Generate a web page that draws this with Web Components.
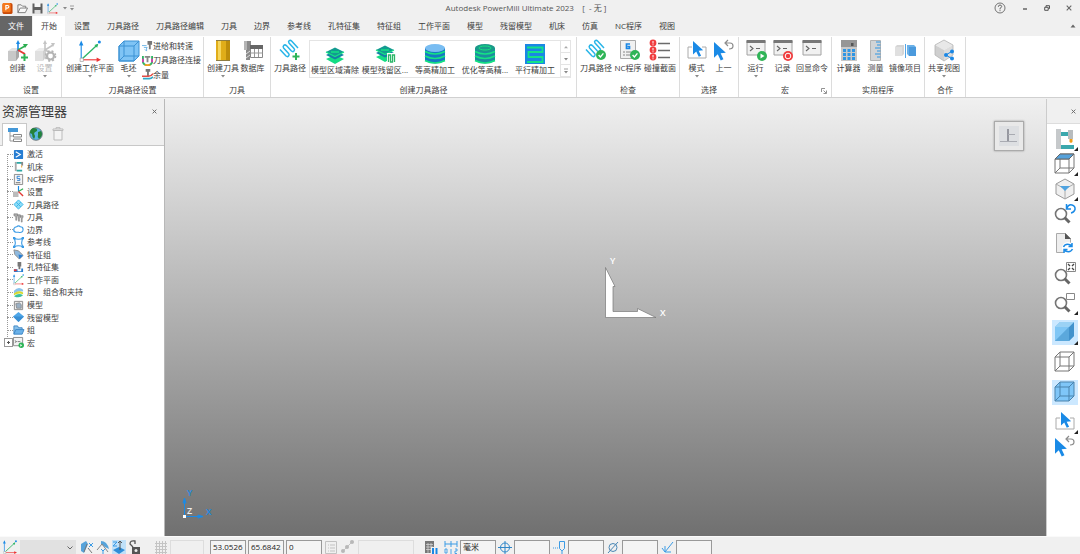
<!DOCTYPE html>
<html lang="zh-CN">
<head>
<meta charset="utf-8">
<title>Autodesk PowerMill Ultimate 2023</title>
<style>
html,body{height:100%;margin:0}
body{font-family:"Open Sans","Noto Sans CJK SC",sans-serif;font-size:8px;line-height:12px;color:#3c3c3c;background:#f0f0f0;overflow:hidden}
</style>
</head>
<body>
<pm-app></pm-app>
<script>
const RESET = `*{box-sizing:border-box}button{font:inherit;color:inherit;background:none;border:0;padding:0;margin:0;cursor:default}ul{list-style:none;margin:0;padding:0}a{color:inherit;text-decoration:none}`;

function define(name, css, html) {
  customElements.define(name, class extends HTMLElement {
    constructor() {
      super();
      this.attachShadow({ mode: 'open' });
    }
    connectedCallback() {
      const t = document.createElement('template');
      t.innerHTML = `<style>${RESET}${css}</style>${typeof html === 'function' ? html(this) : html}`;
      this.shadowRoot.replaceChildren(t.content.cloneNode(true));
    }
  });
}

/* Shared icon fragments */
const gCube = (f1, f2, f3) => `<path d="M1 11l4-3h7l-3 3z" fill="${f1}"/><path d="M1 11h8v10H1z" fill="${f2}"/><path d="M9 11l3-3v9l-3 4z" fill="${f3}"/>`;
const arrowSel = '<path d="M0 0v15l3.6-3.4 2.8 6 2.6-1.200-2.700-5.700 5-.4z" fill="#1a8ae6"/>';
const coil = '<path d="M1 9.500l6 6.500q1.500 1.200 2.600 0t0-2.600L4.600 8q-1-1.500.200-2.600t2.600.200l5 5.400q1.500 1.200 2.600 0t0-2.600L10 3q-1-1.500.200-2.300t2.400.3L19 8" fill="none" stroke="#28b5e8" stroke-width="1.500"/>';
const tick = (x, y) => `<circle cx="${x}" cy="${y}" r="5" fill="#2fb457"/><path d="M${x-2.4} ${y}l1.800 2 3-3.600" fill="none" stroke="#fff" stroke-width="1.300"/>`;
const term = '<path d="M2 1h18v14H2z" fill="#f1f1f1" stroke="#a2a2a2"/><path d="M1.500 0h19v3h-19z" fill="#777"/><path d="M5 6l3 2.500L5 11M11 8.500h4" fill="none" stroke="#666" stroke-width="1.100"/>';
const layers = '<path d="M2 15l9-4 9 4-9 5z" fill="#14dd84"/><path d="M2 11l9-4.500L20 11l-9 4.500z" fill="#167fa5"/><path d="M2 8l9-4.500L20 8l-9 4.500z" fill="#139b90"/><path d="M2 8l9 4.500L20 8M7 8h8" fill="none" stroke="#15e284" stroke-width="1.300"/>';
const lens = '<circle cx="7" cy="11" r="5.500" fill="none" stroke="#757575" stroke-width="1.600"/><path d="M10.500 14.500l5 5" stroke="#666" stroke-width="3"/>';
const wire = (s, f) => `<path d="M1 6l5-5h14v14l-5 5H1z" fill="${f}"/><path d="M1 6h14v14H1zM6 1h14v14H6zM1 6l5-5M15 6l5-5M15 20l5-5M1 20l5-5" fill="none" stroke="${s}"/>`;
const axes = '<path d="M2 18V3" fill="none" stroke="#1a8ae6"/><path d="M3 18h14" stroke="#e33"/><path d="M3 17L17 4" stroke="#2cb564" stroke-width="1.200"/><path d="M0 5l2-4.500L4 5z" fill="#1a8ae6"/><path d="M16 16l4 2-4 2z" fill="#e33"/><path d="M14 4.500l3.500-1-1 3.500z" fill="#2cb564"/><circle cx="18.500" cy="1.800" r="1.400" fill="#1a8ae6"/><path d="M1 16.500h3v3H1z" fill="#fff" stroke="#999" stroke-width=".6"/>';
const cyl = (top, body) => `<path d="M1 5v13q10 5 20 0V5z" fill="${body}"/><ellipse cx="11" cy="5" rx="10" ry="4" fill="${top}"/><path d="M1 8.500q10 5 20 0M1 13q10 5 20 0M1 17.500q10 5 20 0" fill="none" stroke="#14e382" stroke-width="1.700"/>`;

/* name: [viewBox width, viewBox height, markup] */
const ICONS = {
  logo: [11, 12, '<rect width="11" height="12" rx="2" fill="#c94a08"/><rect width="9" height="10" rx="1.500" fill="#f5781c"/><path d="M3.700 8V2.800h1.800q1.500 0 1.500 1.400T5.500 5.600H3.700" fill="none" stroke="#fff" stroke-width="1.200"/>'],
  open: [12, 11, '<path d="M1 10V1.500h3.500L6 3h3.500v2M1 10l2.500-5h8L9 10z" fill="#f8f8f8" stroke="#777"/>'],
  save: [11, 11, '<path d="M.5.500h10v10H.5z" fill="#5e5e5e"/><path d="M2.500 0h6v4h-6z" fill="#f4f4f4"/><path d="M2.500 7h6v4h-6z" fill="#ddd"/>'],
  axes: [20, 20, axes],
  create: [22, 22, gCube('#e2e2e2', '#c8c8c8', '#a8a8a8') + '<path d="M11 11V3" stroke="#1a8ae6" stroke-width="1.600"/><path d="M9 4l2-4 2 4z" fill="#1a8ae6"/><path d="M11 10l7-4" stroke="#2cae50" stroke-width="1.500"/><path d="M16 4l5 0-3 4z" fill="#2cae50"/><path d="M11 10l7 4" stroke="#e23a35" stroke-width="2"/><path d="M17.500 14v7M14 17.500h7" stroke="#2fb457" stroke-width="2"/>'],
  createOff: [22, 22, gCube('#ededed', '#e0e0e0', '#d0d0d0') + '<path d="M11 11V2M11 10l8-5M11 10l6 3" stroke="#c4c4c4" stroke-width="1.600"/><path d="M9 4l2-4 2 4zM17 3h4l-2 4z" fill="#c4c4c4"/><circle cx="16.500" cy="16" r="3.500" fill="none" stroke="#b4b4b4" stroke-width="2.200"/><circle cx="16.500" cy="16" r="5" fill="none" stroke="#b4b4b4" stroke-width="1.600" stroke-dasharray="2 2"/>'],
  block: [22, 22, '<path d="M1 6l5-5h15v15l-5 5H1z" fill="#7fc4f5"/><path d="M1 6h15v15H1zM6 1v15h15M1 21l5-5M16 6l5-5" fill="none" stroke="#3d92d4"/><path d="M1 6l5-5h15v15l-5 5H1z" fill="none" stroke="#3d92d4"/>'],
  feed: [12, 12, '<path d="M6 0h5v4H6zM7.500 4h2v5h-2z" fill="#777"/><path d="M0 5h5M2 7h4M5 7v4l-2-2" stroke="#68b2e6" fill="none"/>'],
  link: [12, 12, '<path d="M1 1v7q1 3 4 3M11 1v7q-1 3-4 3" fill="none" stroke="#2cb564" stroke-width="2"/><path d="M1 4v4M11 4v4" stroke="#d33bb0" stroke-width="2"/><path d="M3 1h6v2H7v5H5V3H3z" fill="#888"/><path d="M3 11h6" stroke="#f0a020" stroke-width="2"/>'],
  allow: [12, 12, '<path d="M4 0h5v3H4zM5.500 3h2v5h-2z" fill="#777"/><path d="M0 8h7q3 0 5-3" fill="none" stroke="#e34b45" stroke-width="1.600"/><path d="M1 10.500h7q2 0 4-2" fill="none" stroke="#32a7c7" stroke-width="2"/>'],
  tool: [22, 22, '<path d="M4 0h14v21H4z" fill="#e0ad19"/><path d="M6 0h3v21H6z" fill="#f6d65d"/><path d="M14 0h4v21h-4z" fill="#bd8d0b"/><path d="M4 .5h14M4 20.500h14" stroke="#8e7c42"/>'],
  data: [22, 22, '<path d="M2 1h7v9H2zM4 10h4v10H4z" fill="#8b8b8b"/><path d="M2 1h3v9H2z" fill="#b5b5b5"/><path d="M4 14l4-3M4 18l4-3" stroke="#ddd"/><path d="M8.500 5.500h12v12h-12z" fill="#fff" stroke="#888"/><path d="M8 5h13v4H8z" fill="#666"/><path d="M8.500 13h12M12.500 9v8M16.500 9v8" stroke="#999"/>'],
  path: [22, 22, coil + '<path d="M17 13v7M13.500 16.500h7" stroke="#2fb457" stroke-width="2"/>'],
  layers: [22, 22, '<g transform="translate(0 2)">' + layers + '</g>'],
  layers2: [22, 22, layers + '<path d="M13 11h8v10h-8z" fill="#fff"/><path d="M14.500 20v-7h2v7h2v-7h2v7" fill="none" stroke="#2bb768" stroke-width="1.300"/>'],
  cyl1: [22, 22, '<g transform="translate(0 1)">' + cyl('#79bdf2', '#1678c4') + '</g>'],
  cyl2: [22, 22, '<g transform="translate(0 1)">' + cyl('#1a9989', '#1c8c9e') + '<ellipse cx="11" cy="5" rx="6" ry="2" fill="none" stroke="#14e382"/></g>'],
  raster: [22, 22, '<path d="M1 2h20v20H1z" fill="#1a87e5"/><path d="M3 5.500h15.500v4.500H4.500v5h14v5H3" fill="none" stroke="#12e28a" stroke-width="1.800"/>'],
  pathOk: [22, 22, coil + tick(16, 15)],
  ncOk: [22, 22, '<path d="M3.500.5h15v18h-15z" fill="#f1f1f1" stroke="#aaa"/><path d="M13 4H9.500v4.500h3V6.500h-2" fill="none" stroke="#1a87e5" stroke-width="1.700"/><path d="M6 12h2M9 12h5M6 15h2M9 15h4" stroke="#888"/>' + tick(18, 15)],
  clash: [22, 22, '<g fill="#f03c3e"><circle cx="4" cy="3" r="3.400"/><circle cx="4" cy="10" r="3.400"/><circle cx="4" cy="17" r="3.400"/></g><path d="M4 1v2.500M4 4.300v1M4 8v2.500M4 11.300v1M4 15v2.500M4 18.300v1" stroke="#fff"/><path d="M9 3.500h12M9 10.500h12M9 17.500h12" stroke="#6b6b6b" stroke-width="1.500"/>'],
  mode: [22, 22, '<path d="M6 7H2v11h18V7h-4" fill="none" stroke="#aaa"/><g transform="translate(7 1) scale(.9)">' + arrowSel + '</g>'],
  last: [22, 22, '<g transform="translate(1 2) scale(1.050)">' + arrowSel + '</g><path d="M13 3h4q3 0 3 3t-4 3M15 0l-3 3 3 3" fill="none" stroke="#8b8b8b" stroke-width="1.200"/>'],
  run: [22, 22, term + '<circle cx="17" cy="16" r="5" fill="#2fb457"/><path d="M15.500 13.500v5l4-2.500z" fill="#fff"/>'],
  rec: [22, 22, term + '<circle cx="16" cy="16" r="5" fill="#f03c3e"/><circle cx="16" cy="16" r="2.800" fill="none" stroke="#fff"/>'],
  term: [22, 22, term],
  calc: [22, 22, '<path d="M3 0h16v21H3z" fill="#c9c9c9"/><path d="M3 0h16v7H3z" fill="#969696"/><path d="M13 3h2.500v3H13z" fill="#555"/><g fill="#2f96e4"><path d="M5 9h3v3H5zM9.500 9h3v3h-3zM14 9h3v3h-3zM5 13h3v3H5zM9.500 13h3v3h-3zM14 13h3v3h-3zM5 17h3v3H5zM9.500 17h3v3h-3zM14 17h3v3h-3z"/></g>'],
  measure: [22, 22, '<path d="M5.500.5h10v20h-10z" fill="#d2d4d6" stroke="#b4b4b4"/><path d="M11 2h4.500M12 5h3.500M10 8h5.500M12 11h3.500M10 14h5.500M12 17h3.500" stroke="#2f96e4"/>'],
  mirror: [22, 22, '<path d="M1 7l2-2h7v9l-2 2H1z" fill="#d5d5d5"/><path d="M1 7h7v9H1z" fill="#e0e0e0"/><path d="M13 5h7l2 2v9h-7l-2-2z" fill="#6bb1e8"/><path d="M15 7h7v9h-7z" fill="#4b9add"/><path d="M11.500 4v14" stroke="#55a6e6"/>'],
  share: [22, 22, '<path d="M2 5l9-5 9 5-9 5z" fill="#e8e8e8"/><path d="M2 5l9 5v11l-9-6z" fill="#cfcfcf"/><path d="M20 5l-9 5v11l9-6z" fill="#dcdcdc"/><path d="M2 5l9-5 9 5v10l-9 6-9-6z" fill="none" stroke="#b4b4b4" stroke-width=".8"/><path d="M18.500 11.500L13 15l5.500 3.500" stroke="#1a87e5" fill="none"/><g fill="#1a87e5"><circle cx="19" cy="11.500" r="2"/><circle cx="13" cy="15" r="2"/><circle cx="19" cy="18.500" r="2"/></g>'],
  launch: [6, 6, '<path d="M.5 4V.5H4M2.500 2.500L5 5M5.500 2.500v3h-3" fill="none" stroke="#777" stroke-width=".8"/>'],
  help: [12, 12, '<circle cx="6" cy="6" r="5" fill="none" stroke="#666" stroke-width=".9"/><path d="M4.300 4.800Q4.500 3 6 3t1.700 1.500Q7.700 5.500 6 6.300V7.400M6 8.200v1" fill="none" stroke="#555" stroke-width=".9"/>'],
  min: [6, 6, '<path d="M1 4h4" stroke="#444" stroke-width="1.200"/>'],
  restore: [6, 6, '<path d="M2 2V.7h3.500v2.800H4.500M.7 2.300h3.500v3H.7z" fill="none" stroke="#444" stroke-width=".9"/>'],
  close: [6, 6, '<path d="M.7.700l4.600 4.600M5.300.700L.7 5.300" stroke="#666" stroke-width="1.100"/>'],
  down: [6, 6, '<path d="M1 2h4L3 4.500z" fill="#888"/>'],
  more: [6, 6, '<path d="M1 1h4" stroke="#888" stroke-width=".8"/><path d="M1 3h4L3 5.500z" fill="#888"/>'],
  up: [6, 6, '<path d="M.5 4.500h5L3 1.500z" fill="#666"/>'],
  caret: [6, 6, '<path d="M1 4.200h4L3 2z" fill="#aaa"/>'],
  tree: [16, 16, '<path d="M1 1h10v4H1z" fill="#4598d8"/><path d="M3 5v9h4M3 9h4" fill="none" stroke="#999"/><path d="M6.500 7.500h8v2.500h-8zM6.500 12h8v2.500h-8z" fill="#fff" stroke="#888"/>'],
  globe: [14, 14, '<circle cx="7" cy="7" r="6.300" fill="#57b4e2" stroke="#686868" stroke-width=".8"/><path d="M4 1q5 0 4 3-3 1-3 3 2 2 0 5-2-2-2-5l-2-1q0-4 3-5M9 5l3-1q2 3 0 6l-2 2q-2-2-1-4z" fill="#24823b"/>'],
  trash: [12, 14, '<path d="M2 3.500h8V13H2zM1 3.500V2h10v1.500zM4 2V.700h4V2" fill="#f4f4f4" stroke="#bbb"/>'],
  t0: [12, 12, '<rect x="1" y="1" width="10" height="10" rx="1" fill="#277dd2"/><path d="M3 3l5 3-5 3" fill="none" stroke="#fff" stroke-width="1.200"/>'],
  t1: [12, 12, '<path d="M2 1h2v10H2z" fill="#aaa"/><path d="M4 1h6v2H4zM4 9.500h6v2H4z" fill="#2ca7a5"/><path d="M9 1h2v4H9z" fill="#888"/><path d="M9 5h1v2H9z" fill="#e8a020"/>'],
  t2: [12, 12, '<path d="M1.500.5h9v11h-9z" fill="#f4f4f4" stroke="#888"/><path d="M7.500 2.500h-3V5h3v2h-3" fill="none" stroke="#277dd2"/><path d="M3 9.500h5" stroke="#666"/>'],
  t3: [12, 12, '<path d="M0 6h6v6H0z" fill="#bbb"/><path d="M6 6V0" stroke="#1a8ae6" stroke-width="1.300"/><path d="M6 6l5-3" stroke="#2cae50" stroke-width="1.300"/><path d="M6 6l5 5" stroke="#e23a35" stroke-width="1.500"/>'],
  t4: [12, 12, '<path d="M6 1l5 5-5 5-5-5zM3.500 3.500l5 5M8.500 3.500l-5 5" fill="#8fdcf8" stroke="#35b6e8"/>'],
  t5: [12, 12, '<path d="M1 2h4v2L4 5v4H3V5L1 4zM5 3h3v2l-1 1v4H6zM8 4h3v2l-1 1v4H9V7L8 6z" fill="#aaa" stroke="#777" stroke-width=".6"/>'],
  t6: [12, 12, '<path d="M3 9Q0 8 1 5q1-2 3-2 2-2 4 0 3 0 3 3 0 4-5 3z" fill="#fff" stroke="#3b9be5" stroke-width="1.200"/>'],
  t7: [12, 12, '<path d="M1 1q5 3 10 0-3 5 0 10-5-3-10 0 3-5 0-10z" fill="none" stroke="#3b9be5" stroke-width="1.200"/><path d="M0 0h2.500v2.500H0zM9.500 0H12v2.500H9.500zM0 9.500h2.500V12H0zM9.500 9.500H12V12H9.500z" fill="#3b9be5"/>'],
  t8: [12, 12, '<path d="M1 1l5 1 5 5-4 4-5-5z" fill="#8fb9dd" stroke="#8a8a8a"/><path d="M6 6l5 1-4 4z" fill="#277dd2"/>'],
  t9: [12, 12, '<path d="M5 0h4v5H8v3H6V5H5z" fill="#777"/><path d="M1 8h4v2h4V7h2v4H1z" fill="#277dd2"/><path d="M1 9h3" stroke="#e23a35" stroke-width="2"/>'],
  t11: [12, 12, '<path d="M1 4q5-5 10-1v2q-5-1-10 2z" fill="#8bc2ec"/><path d="M1 7q5-4 10-1v2Q6 6 1 9z" fill="#d7d930"/><path d="M1 10q5-4 10-1-4 4-10 1z" fill="#3bc0a0"/>'],
  t12: [12, 12, '<path d="M1.500 1.500h9v9h-9z" fill="#eee" stroke="#888"/><path d="M3 4l4-1 2 2v4H4z" fill="#9bb0c4" stroke="#777" stroke-width=".7"/>'],
  t13: [12, 12, '<path d="M6 0l6 5-6 6-6-6z" fill="#4fa6e8"/><path d="M0 5h12l-6 6z" fill="#3a8fd4"/>'],
  t14: [12, 12, '<path d="M1 10V1h4l1 2h4v2" fill="#89c1eb" stroke="#3b85c4"/><path d="M1 10l2-5h9l-2 5z" fill="#6bb1e8" stroke="#3b85c4"/>'],
  t15: [12, 12, '<path d="M.5.500h10v9H.5z" fill="#f3f3f3" stroke="#888"/><path d="M2 4l2 1-2 1M5 5h3" stroke="#777" fill="none"/><circle cx="9" cy="9" r="3" fill="#2fb457"/><path d="M8 7.500v3l2-1.500z" fill="#fff"/>'],
  machine: [22, 22, '<path d="M2 1h5v20H2z" fill="#c6c9cb"/><path d="M7 4h7v4H7zM7 17h13v4H7z" fill="#3ba8ad"/><path d="M14 2h5v9h-5z" fill="#b8bcbe"/><path d="M15.500 11h3v3l-1.500 1-1.500-1z" fill="#ef9d18"/>'],
  viewTop: [22, 22, wire('#777', '#fff') + '<path d="M1 6l5-5h14l-5 5z" fill="#55a1da" stroke="#666"/>'],
  viewIso: [22, 22, '<path d="M11 1l9 5v10l-9 5-9-5V6z" fill="#efefef" stroke="#999"/><path d="M2 6l9 5 9-5M11 11v10" stroke="#aaa" fill="none"/><path d="M6 8h10l-5 5z" fill="#4fa3e0"/>'],
  zoomBack: [22, 22, lens + '<path d="M13 5q1.500-4 5-3t3 4.500q-1 3-4 3.500M12.500 1v5H17" fill="none" stroke="#1a8ae6" stroke-width="1.500"/>'],
  refresh: [22, 22, '<path d="M2.500 1.500h9l5 5v14h-14z" fill="#eee" stroke="#aaa"/><path d="M11 1v6h6z" fill="#555"/><circle cx="14" cy="16" r="6" fill="#fff"/><path d="M9.500 15q2-4 7-2l1 1M18.500 17q-2 4-7 2l-1-1M18 11v3.500h-3.500M10 21v-3.500h3.500" fill="none" stroke="#1a8ae6" stroke-width="1.500"/>'],
  zoomFit: [22, 22, '<g transform="translate(0 2)">' + lens + '</g><path d="M12.500.5h9v9h-9z" fill="#fff" stroke="#888"/><path d="M14 2l2 2M20 2l-2 2M14 8l2-2M20 8l-2-2" stroke="#444" stroke-width="1.300"/>'],
  zoomBox: [22, 22, lens + '<path d="M12.500 1.500h8v6h-8z" fill="#fff" stroke="#888"/>'],
  shaded: [22, 22, '<path d="M1 6l5-5h14v14l-5 5H1z" fill="#6fb7ea"/><path d="M1 6h14L1 20z" fill="#7fc6f5"/><path d="M15 6L1 20h14z" fill="#5ba8dc"/><path d="M15 6l5-5v14l-5 5z" fill="#4292cc"/><path d="M1 6l5-5h14l-5 5z" fill="#9bd2f5"/>'],
  wire: [22, 22, wire('#777', '#fff')],
  wireOn: [22, 22, wire('#4a83ad', '#7fc6f8')],
  wpX: [14, 14, '<path d="M1 4l5-3 2 3-4 9-3-2z" fill="#57a3da"/><path d="M4 12l3-8M8 8l4 5" stroke="#777"/><path d="M9 3l4 4M13 3L9 7" stroke="#3b9be5"/>'],
  wpY: [14, 14, '<path d="M5 1q6 0 8 8l-4-2-4-3z" fill="#57a3da"/><path d="M1 10l5-6 6 8" stroke="#888" fill="none"/><path d="M5 9l2 2 2-2M7 11v3" stroke="#3b9be5" fill="none"/>'],
  wpZ: [14, 14, '<path d="M1 10l6-3 6 3-6 4z" fill="#2f8ed8"/><path d="M8 1v9M6 3l2-2 2 2" stroke="#555" fill="none"/><path d="M1 2h4L1 6h4" stroke="#3b9be5" fill="none"/>'],
  lock: [14, 14, '<path d="M4 7h8v7H4z" fill="#555"/><path d="M5 7L2 4q0-4 5-3v3" fill="none" stroke="#555" stroke-width="1.300"/><circle cx="8" cy="10.500" r="1.500" fill="#eee"/>'],
  grid: [14, 14, '<path d="M2.500 1v13M5.500 1v13M8.500 1v13M11.500 1v13M1 3.500h12M1 6.500h12M1 9.500h12M1 12.500h12" stroke="#c4c4c4"/>'],
  listOff: [14, 14, '<path d="M1.500 1.500h11v12h-11zM4 5h1M6 5h5M4 8h1M6 8h5M4 11h1M6 11h5" fill="none" stroke="#c2c2c2"/>'],
  pts: [14, 14, '<path d="M2 12L12 2" stroke="#c4c4c4"/><g fill="#b8b8b8"><circle cx="3" cy="11" r="2"/><circle cx="7" cy="7" r="2"/><circle cx="12" cy="2" r="2"/></g>'],
  calcPause: [14, 14, '<path d="M1 1h9v12H1z" fill="#777"/><path d="M2 4.500h7M2 7h7M2 9.500h7M4 3v10M7 3v10" stroke="#ddd" stroke-width=".7"/><path d="M7 7h7v7H7z" fill="#f0f0f0"/><path d="M9 8v6M12.500 8v6" stroke="#1a87e5" stroke-width="2"/>'],
  ruler: [14, 14, '<path d="M1 1v6M7 1v6M13 1v6M1 4h12" stroke="#3b9be5" fill="none"/><path d="M1 9h2v4H1zM7 9v5M11 9h2v2h-2v2.500h2" stroke="#3b9be5" fill="none" stroke-width=".9"/>'],
  target: [14, 14, '<circle cx="7" cy="7.500" r="4.500" fill="none" stroke="#2f86c8"/><path d="M7 1v13M0 7.500h14" stroke="#2f86c8"/>'],
  probe: [14, 14, '<path d="M7.500 1.500h5v7l-2 2h-1l-2-2zM10 10v4" fill="none" stroke="#3b9be5"/><path d="M1 8h5" stroke="#3b9be5" stroke-dasharray="1 1"/>'],
  diam: [14, 14, '<circle cx="7" cy="7.500" r="4" fill="none" stroke="#4a87b5"/><path d="M2 13L12 2" stroke="#4a87b5"/>'],
  angle: [14, 14, '<path d="M2 8l3 4 8-10M5 6v6h6" fill="none" stroke="#3b9be5"/>']
};
ICONS.t10 = ICONS.axes;

define('pm-icon',
  ':host{display:block;flex:none;width:22px;height:22px}svg{display:block;width:100%;height:100%;overflow:visible}',
  el => { const [w, h, m] = ICONS[el.getAttribute('name')]; return `<svg viewBox="0 0 ${w} ${h}" aria-hidden="true">${m}</svg>`; });

define('pm-titlebar', `
:host{display:flex;align-items:center;height:16px;color:#555}
.quick{display:flex;align-items:center;gap:4px;width:72px;padding-left:2px}
.quick pm-icon{width:11px;height:11px}
.quick button.s pm-icon,.win .s pm-icon{width:6px;height:6px}
.quick .s + .s{margin-left:-3px}
h1{flex:1;margin:0;font:inherit;text-align:center;white-space:pre}
.win{display:flex;align-items:center;justify-content:space-between;width:100px;padding:0 8px 0 14px}
.win pm-icon{width:12px;height:12px}`, `
<div class="quick"><pm-icon name="logo"></pm-icon>
<button aria-label="打开"><pm-icon name="open"></pm-icon></button><button aria-label="保存"><pm-icon name="save"></pm-icon></button>
<button aria-label="工作平面"><pm-icon name="axes"></pm-icon></button><button class="s" aria-label="下拉"><pm-icon name="down"></pm-icon></button><button class="s" aria-label="自定义"><pm-icon name="more"></pm-icon></button></div>
<h1>Autodesk PowerMill Ultimate 2023    [  - 无 ]</h1>
<div class="win"><button aria-label="帮助"><pm-icon name="help"></pm-icon></button><button class="s" aria-label="最小化"><pm-icon name="min"></pm-icon></button>
<button class="s" aria-label="还原"><pm-icon name="restore"></pm-icon></button><button class="s" aria-label="关闭"><pm-icon name="close"></pm-icon></button></div>`);

const TABS = ['文件','开始','设置','刀具路径','刀具路径编辑','刀具','边界','参考线','孔特征集','特征组','工作平面','模型','残留模型','机床','仿真','NC程序','视图'];
define('pm-tabs', `
:host{display:flex;align-items:stretch;height:20px;padding-right:4px}
nav{display:flex;gap:1px;flex:1}
a{padding:4px 8px;white-space:nowrap}
.file{background:#666;color:#fff}
.on{background:#fff}
pm-icon{width:6px;height:6px}
button{align-self:center}`,
`<nav>${TABS.map((t, i) => `<a href="#" class="${['file', 'on'][i] || ''}">${t}</a>`).join('')}</nav><button aria-label="折叠功能区"><pm-icon name="up"></pm-icon></button>`);

define('pm-group', `
:host{display:flex;flex-direction:column;flex:none;border-right:1px solid #dcdcdc;height:60px;padding:2px 3px 0;position:relative}
.tools{display:flex;height:45px}
footer{text-align:center;white-space:nowrap}
.launch{position:absolute;right:4px;bottom:3px}
.launch pm-icon{width:6px;height:6px}`,
el => `<div class="tools"><slot></slot></div><footer>${el.getAttribute('label')}</footer>${el.hasAttribute('launch') ? '<button class="launch" aria-label="更多"><pm-icon name="launch"></pm-icon></button>' : ''}`);

define('pm-tool', `
:host{display:block;flex:none;width:27px;padding-top:1px}
:host([size=m]){width:32px}:host([size=l]){width:50px}
:host([off]){color:#b9b9b9}
button{display:flex;flex-direction:column;align-items:center;width:100%;white-space:nowrap;line-height:11px}
.a{width:6px;height:6px}`,
el => `<button${el.hasAttribute('off') ? ' disabled' : ''}><pm-icon name="${el.getAttribute('icon')}"></pm-icon><span>${el.getAttribute('label')}</span>${el.hasAttribute('menu') ? '<pm-icon class="a" name="down"></pm-icon>' : ''}</button>`);

define('pm-small-tools', `
:host{display:grid;grid-auto-rows:1fr;height:43px}
button{display:flex;align-items:center;white-space:nowrap}
pm-icon{width:11px;height:11px}`,
[['feed','进给和转速'],['link','刀具路径连接'],['allow','余量']].map(([i, t]) => `<button><pm-icon name="${i}"></pm-icon>${t}</button>`).join(''));

define('pm-gallery', `
:host{display:flex;border:1px solid #e4e4e4;height:38px;margin:1px 0 0 3px}
.spin{display:grid;grid-auto-rows:1fr;width:10px}
.spin button{border-left:1px solid #e4e4e4;border-bottom:1px solid #e4e4e4;display:grid;place-items:center}
.spin pm-icon{width:6px;height:6px}`, `
${[['layers','模型区域清除'],['layers2','模型残留区...'],['cyl1','等高精加工'],['cyl2','优化等高精...'],['raster','平行精加工']].map(([i, t]) => `<pm-tool size="l" icon="${i}" label="${t}"></pm-tool>`).join('')}
<div class="spin"><button aria-label="向上"><pm-icon name="caret"></pm-icon></button><button aria-label="向下"><pm-icon name="down"></pm-icon></button><button aria-label="展开"><pm-icon name="more"></pm-icon></button></div>`);

define('pm-ribbon', `
:host{display:flex;height:62px;background:#fff;border-bottom:1px solid #d0d0d0;padding-top:1px}
.g1{width:62px;padding-left:4px}.g2{width:142px}.g3{width:67px}.g4{width:306px}.g5{width:103px}.g6{width:59px}.g7,.g8{width:93px}.g9{width:41px}`, `
<pm-group class="g1" label="设置"><pm-tool icon="create" label="创建"></pm-tool><pm-tool icon="createOff" label="设置" off menu></pm-tool></pm-group>
<pm-group class="g2" label="刀具路径设置"><pm-tool size="l" icon="axes" label="创建工作平面" menu></pm-tool><pm-tool icon="block" label="毛坯" menu></pm-tool><pm-small-tools></pm-small-tools></pm-group>
<pm-group class="g3" label="刀具"><pm-tool size="m" icon="tool" label="创建刀具" menu></pm-tool><pm-tool icon="data" label="数据库"></pm-tool></pm-group>
<pm-group class="g4" label="创建刀具路径"><pm-tool size="m" icon="path" label="刀具路径"></pm-tool><pm-gallery></pm-gallery></pm-group>
<pm-group class="g5" label="检查"><pm-tool size="m" icon="pathOk" label="刀具路径"></pm-tool><pm-tool size="m" icon="ncOk" label="NC程序"></pm-tool><pm-tool size="m" icon="clash" label="碰撞截面"></pm-tool></pm-group>
<pm-group class="g6" label="选择"><pm-tool icon="mode" label="模式" menu></pm-tool><pm-tool icon="last" label="上一"></pm-tool></pm-group>
<pm-group class="g7" label="宏" launch><pm-tool icon="run" label="运行" menu></pm-tool><pm-tool icon="rec" label="记录"></pm-tool><pm-tool size="m" icon="term" label="回显命令"></pm-tool></pm-group>
<pm-group class="g8" label="实用程序"><pm-tool icon="calc" label="计算器"></pm-tool><pm-tool icon="measure" label="测量"></pm-tool><pm-tool size="m" icon="mirror" label="镜像项目"></pm-tool></pm-group>
<pm-group class="g9" label="合作"><pm-tool size="m" icon="share" label="共享视图" menu></pm-tool></pm-group>`);

const NODES = ['激活','机床','NC程序','设置','刀具路径','刀具','边界','参考线','特征组','孔特征集','工作平面','层、组合和夹持','模型','残留模型','组','宏'];
define('pm-explorer', `
:host{display:flex;flex-direction:column;flex:none;width:165px;background:#fff;border-right:1px solid #b8b8b8}
header{display:flex;align-items:center;justify-content:space-between;height:24px;padding:0 7px 0 2px;background:#f0f0f0}
h2{margin:0;font-size:13px;line-height:20px;font-weight:400}
header pm-icon{width:5px;height:5px}
.tabs{display:flex;align-items:center;height:23px;background:#f0f0f0;border-bottom:1px solid #c8c8c8;gap:8px;padding-left:2px}
.tabs button{display:grid;place-items:center;width:14px;height:23px}
.tabs .on{width:25px;background:#fff;border:1px solid #c8c8c8;border-bottom:0;margin-right:-6px}
.tabs pm-icon{width:14px;height:14px}
.tabs .on pm-icon{width:16px;height:16px}
ul{display:grid;grid-auto-rows:1fr;height:201px;margin:2px 0 0 7px;position:relative}
ul::before{content:"";position:absolute;left:0;top:6px;bottom:6px;border-left:1px dotted #999}
li{display:flex;align-items:center;white-space:nowrap}
li::before{content:"";width:6px;border-top:1px dotted #999}
li pm-icon{width:11px;height:11px;margin-right:3px}
li:last-child::after{content:"";position:absolute;left:-3px;width:7px;height:7px;border:1px solid #999;background:linear-gradient(#555,#555) center/3px 1px no-repeat,linear-gradient(#555,#555) center/1px 3px no-repeat,#fff}`, `
<header><h2>资源管理器</h2><button aria-label="关闭"><pm-icon name="close"></pm-icon></button></header>
<div class="tabs"><button class="on" aria-label="资源"><pm-icon name="tree"></pm-icon></button><button aria-label="浏览器"><pm-icon name="globe"></pm-icon></button><button aria-label="回收站"><pm-icon name="trash"></pm-icon></button></div>
<ul>${NODES.map((t, i) => `<li><pm-icon name="t${i}"></pm-icon>${t}</li>`).join('')}</ul>`);

define('pm-viewport', `
:host{display:block;flex:1;position:relative;background:linear-gradient(#f0f0f0,#707070);overflow:hidden}
svg{position:absolute;overflow:visible}
.axis{left:50%;top:168px;width:60px;height:52px;margin-left:-1px}
.triad{left:16px;bottom:14px;width:40px;height:40px}
text{font-family:"Open Sans",sans-serif;font-size:9px;font-weight:600}
.top{position:absolute;right:22px;top:22px;width:30px;height:30px;border:1px solid #aaa;background:#e9e9e9;box-shadow:0 0 2px #999;display:grid;place-items:center}
.top svg{position:static;width:20px;height:20px}`, `
<button class="top" aria-label="上视图"><svg viewBox="0 0 20 20"><path d="M0 0h20v20H0z" fill="#dddfe2"/><path d="M9 3v13" stroke="#9698a0" stroke-width="2"/><path d="M9 8.500h7M1 15.500h17" stroke="#a9abb2"/></svg></button>
<svg class="axis" viewBox="0 0 60 52"><path d="M.5.500V50.500H51L32.500 41.500V44.500H8V19.500h2z" fill="#fff" stroke="#777" stroke-width=".7"/><text x="5" y="-3" fill="#fff">Y</text><text x="55" y="49" fill="#fff">X</text></svg>
<svg class="triad" viewBox="0 0 40 40"><path d="M3.500 34V16M5 34.500h17" stroke="#1a8ae6" fill="none"/><path d="M2 21l1.500-5L5 21zM17 33l5 1.500-5 1.500z" fill="none" stroke="#1a8ae6"/><path d="M2 33h3v3H2z" fill="#fff"/><text x="6" y="14" fill="#1a8ae6">Y</text><text x="25" y="33" fill="#1a8ae6">X</text><text x="6" y="32" fill="#eee">Z</text></svg>`);

const VIEWS = [
  [['machine','机床',1],['viewTop','上视图',1],['viewIso','等轴测',1],['zoomBack','上一视图']],
  [['refresh','刷新'],['zoomFit','全屏'],['zoomBox','框选缩放',1],['shaded','着色',1,1],['wire','线框'],['wireOn','毛坯',0,1]],
  [['mode','选择',1],['last','上一选择']]
];
define('pm-viewbar', `
:host{display:flex;flex-direction:column;flex:none;width:34px;background:#fff;border-left:1px solid #ccc;gap:2px}
header{display:flex;align-items:center;justify-content:flex-end;height:25px;padding-right:4px;background:#f0f0f0;border-bottom:1px solid #ddd}
header pm-icon{width:5px;height:5px}
div{display:grid;grid-auto-rows:1fr;height:100px;padding-left:5px;align-items:center}
.s1{height:179px}.s2{height:50px}
div button{position:relative;width:26px;height:25px;display:grid;place-items:center}
.on{background:#cce8ff}
.m::after{content:"";position:absolute;right:0;bottom:0;border:2px solid #222;border-top-color:transparent;border-left-color:transparent}`,
`<header><button aria-label="关闭"><pm-icon name="close"></pm-icon></button></header>` +
VIEWS.map((g, i) => `<div class="s${i}">${g.map(([n, l, m, on]) => `<button aria-label="${l}" class="${m ? 'm ' : ''}${on ? 'on' : ''}"><pm-icon name="${n}"></pm-icon></button>`).join('')}</div>`).join(''));

const ib = (n, l, c = '') => `<button class="${c}" aria-label="${l}"><pm-icon name="${n}"></pm-icon></button>`;
const inp = (l, v = '', c = '') => `<input aria-label="${l}" value="${v}" class="${c}"${c.includes('off') ? ' disabled' : ''}>`;
define('pm-status', `
:host{display:flex;flex:none;align-items:flex-start;height:18px;padding:3px 2px 0;gap:2px;background:#f0f0f0;border-top:1px solid #fafafa;overflow:hidden}
pm-icon{width:14px;height:14px}
button{flex:none}
.first pm-icon{width:16px}
.on{background:#bfe0f8}
select{appearance:none;flex:none;width:56px;height:15px;border:0;background:#e1e1e1;font:inherit}
.sel{display:flex;align-items:center;position:relative;margin-right:2px}
.sel svg{position:absolute;right:3px;width:6px;height:4px}
input{flex:none;width:36px;height:17px;padding:0 2px 4px;border:1px solid #999;background:#f4f4f4;font:inherit;line-height:11px;color:#222;border-radius:0}
.off{border-color:#ddd;background:#f0f0f0}
.n{width:34px}.w{width:56px;margin-left:2px}
.g4{margin-left:4px}.g8{margin-left:8px}.g10{margin-left:10px}`,
ib('axes', '工作平面', 'first') + '<span class="sel"><select aria-label="激活工作平面"><option></option></select><svg viewBox="0 0 6 4"><path d="M.5.500L3 3 5.500.500" fill="none" stroke="#666"/></svg></span>' +
ib('wpX', 'X平面') + ib('wpY', 'Y平面') + ib('wpZ', 'Z平面', 'on') + ib('lock', '锁定') + ib('grid', '网格', 'g10') + inp('网格尺寸', '', 'off n') +
inp('X', '53.0526', 'g4') + inp('Y', '65.6842') + inp('Z', '0') + ib('listOff', '位置') + ib('pts', '点') + inp('公式', '', 'off w') +
ib('calcPause', '计算', 'g8') + ib('ruler', '单位', 'g4') + inp('单位值', '毫米') + ib('target', '公差') + inp('公差值') + ib('probe', '余量') + inp('余量值') + ib('diam', '直径') + inp('直径值') + ib('angle', '刀尖半径') + inp('刀尖半径值'));

define('pm-app', `
:host{display:flex;flex-direction:column;height:100vh;overflow:hidden}
main{display:flex;flex:1;min-height:0;padding-top:1px}`,
'<pm-titlebar></pm-titlebar><pm-tabs></pm-tabs><pm-ribbon></pm-ribbon><main><pm-explorer></pm-explorer><pm-viewport></pm-viewport><pm-viewbar></pm-viewbar></main><pm-status></pm-status>');
</script>
</body>
</html>
